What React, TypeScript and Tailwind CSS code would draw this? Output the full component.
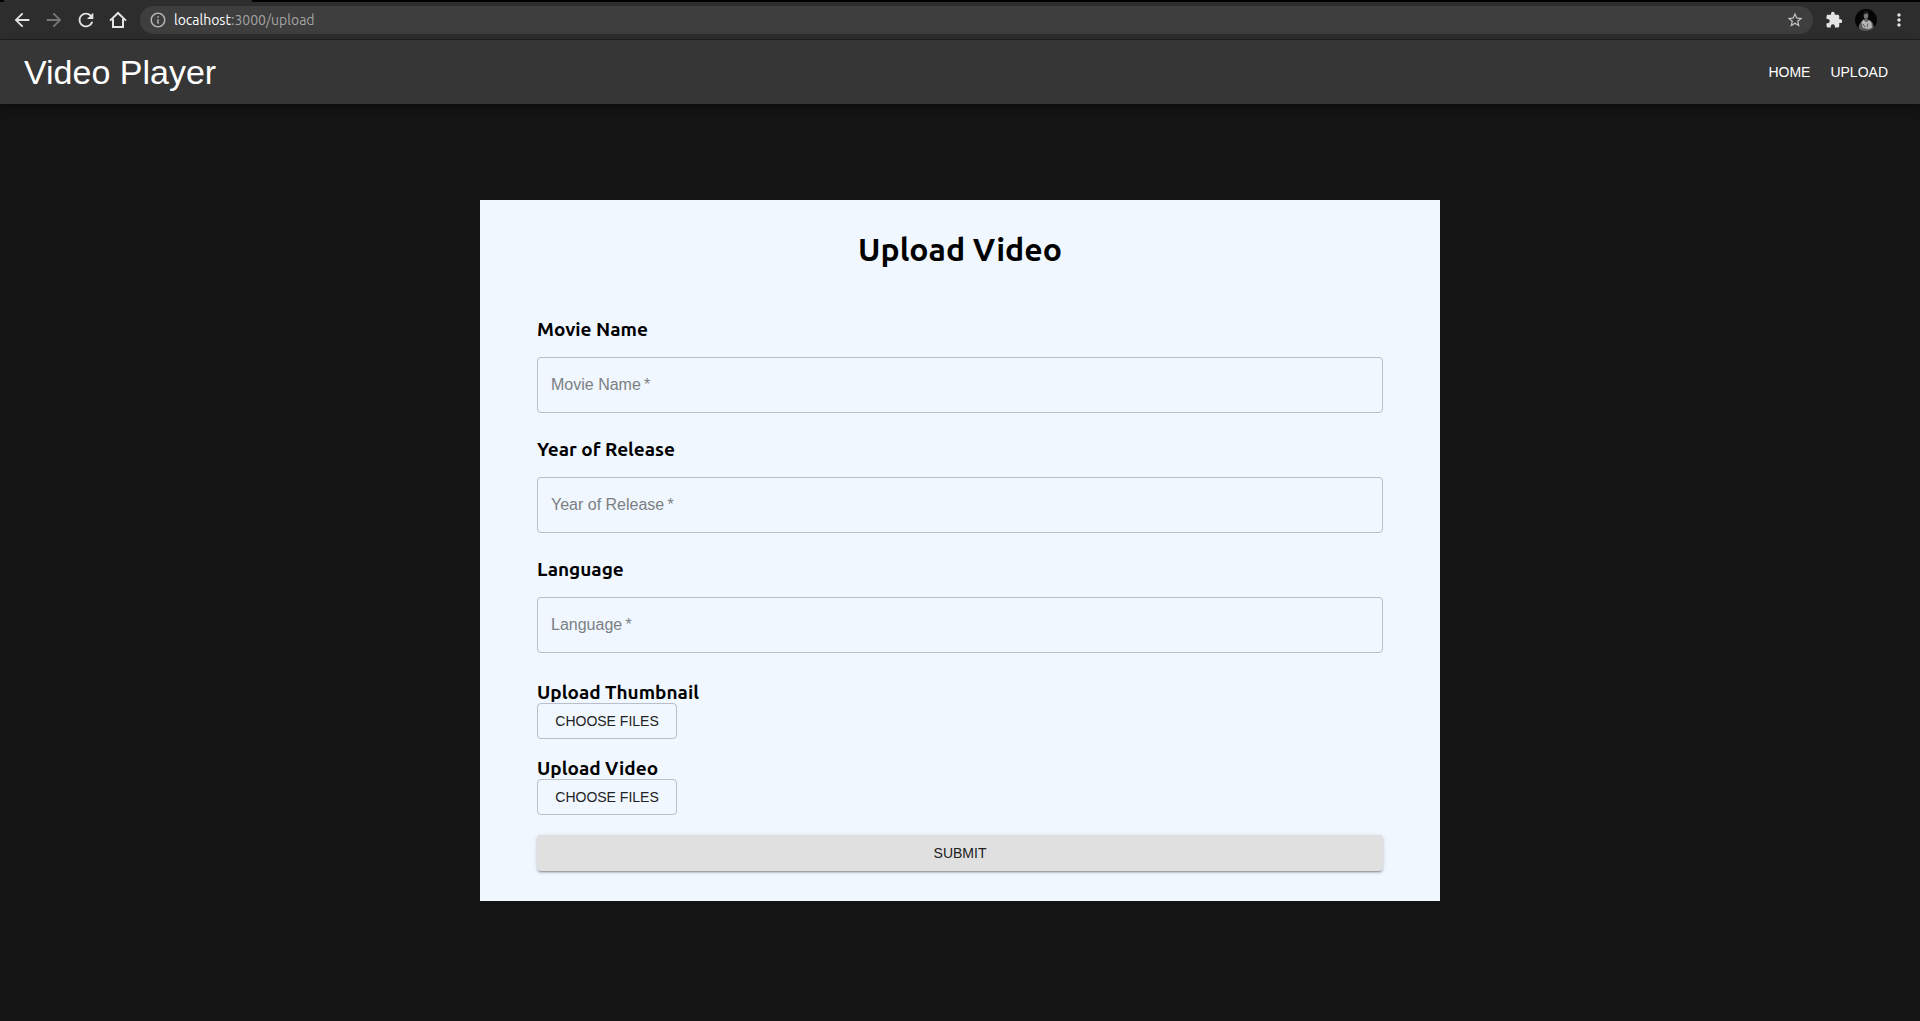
import { useRef } from "react";
import {
  MdArrowBack,
  MdArrowForward,
  MdExtension,
  MdInfoOutline,
  MdMoreVert,
  MdRefresh,
  MdStarBorder,
} from "react-icons/md";

function HomeIcon() {
  return (
    <svg width="18" height="18" viewBox="0 0 18 18" fill="none" stroke="currentColor" strokeWidth="2" aria-hidden="true">
      <path d="M1 9.6 9 2l8 7.6" />
      <path d="M4 7.5V16h10V7.5" />
    </svg>
  );
}

function Avatar() {
  return (
    <svg width="22" height="22" viewBox="0 0 22 22" aria-hidden="true">
      <clipPath id="avatar-clip">
        <circle cx="11" cy="11" r="11" />
      </clipPath>
      <g clipPath="url(#avatar-clip)">
        <rect width="22" height="22" fill="#050505" />
        <path d="M4 22c-.8-4-.2-7 2.500-9.500L9 10.500h4l3 1.500c2.500 1.800 3.200 5.500 3 10z" fill="#5e5e5e" />
        <path d="M6.500 13 8.500 10.500l3 3 2.500-2.500 2.500 3 .5 4.500-3 1.500-6-1z" fill="#b5b5b5" />
        <ellipse cx="11" cy="6.500" rx="2.300" ry="3.200" fill="#777" />
        <path d="M8.500 6c0-3 1.200-4 2.700-4s2.600 1 2.400 3.500c-1.500-1.500-3-1.300-5.100.5z" fill="#1c1c1c" />
        <path d="M9.500 9.500h3v2l-1.500 1.500-1.500-1.500z" fill="#666" />
        <path d="m8 15 2 3m3-3.500-1 3.500m-5 1 3 1" stroke="#555" fill="none" />
      </g>
    </svg>
  );
}

function BrowserBar() {
  return (
    <div className="border-b border-[#212121] bg-[#2d2d2d] text-[#e4e4e4]">
      <div className="flex h-0.5 bg-black">
        <div className="ml-1 w-[248px] bg-[#2d2d2d]" />
      </div>
      <div className="flex h-[37px] items-center pr-[11px] pb-px pl-[11px]">
        <div className="mr-[11px] flex items-center gap-2.5">
          <button type="button" aria-label="Back"><MdArrowBack size={22} /></button>
          <button type="button" aria-label="Forward" className="text-[#777777]"><MdArrowForward size={22} /></button>
          <button type="button" aria-label="Reload"><MdRefresh size={22} /></button>
          <button type="button" aria-label="Home page" className="px-0.5"><HomeIcon /></button>
        </div>
        <div className="flex h-7 flex-1 items-center rounded-full bg-[#3e3e3e] px-[9px]">
          <MdInfoOutline size={18} className="text-[#b4b4b4]" />
          <span className="ml-[7px] flex-1 font-['Ubuntu','Noto_Sans',sans-serif] text-sm leading-5 text-[#a5a5a5]">
            <span className="text-white">localhost</span>:3000/upload
          </span>
          <button type="button" aria-label="Bookmark this page" className="text-[#c4c4c4]"><MdStarBorder size={18} /></button>
        </div>
        <div className="ml-3 flex items-center gap-3">
          <button type="button" aria-label="Extensions"><MdExtension size={18} /></button>
          <button type="button" aria-label="Profile"><Avatar /></button>
          <button type="button" aria-label="Menu"><MdMoreVert size={20} /></button>
        </div>
      </div>
    </div>
  );
}

function NavBar() {
  return (
    <header className="flex h-16 items-center justify-between bg-[#363636] px-6 text-white shadow-[0_2px_4px_-1px_rgba(0,0,0,0.2),0_4px_5px_rgba(0,0,0,0.14),0_1px_10px_rgba(0,0,0,0.12)]">
      <span className="text-[34px] leading-[42px]">Video Player</span>
      <nav className="mr-2 flex gap-5 text-sm uppercase">
        <a href="/">Home</a>
        <a href="/upload">Upload</a>
      </nav>
    </header>
  );
}

const headingFont = "font-['Ubuntu','Noto_Sans',sans-serif] font-bold";
const labelStyle = "block text-[19px] leading-[22px]";

function Field({ id, label }: { id: string; label: string }) {
  return (
    <div className="mb-[25px]">
      <label htmlFor={id} className={`${headingFont} ${labelStyle}`}>{label}</label>
      <input
        id={id}
        type="text"
        required
        placeholder={`${label}\u2009*`}
        className="mt-[17px] block h-14 w-full rounded border border-[#b9bec8] bg-transparent px-[13px] text-base placeholder:text-[#7c7f83]"
      />
    </div>
  );
}

function FilePicker({ id, label, accept }: { id: string; label: string; accept: string }) {
  const input = useRef<HTMLInputElement>(null);
  return (
    <div>
      <label htmlFor={id} className={`${headingFont} ${labelStyle}`}>{label}</label>
      <input ref={input} type="file" accept={accept} multiple hidden />
      <button
        id={id}
        type="button"
        onClick={() => input.current?.click()}
        className="block h-9 w-[140px] rounded border border-[#b9bec8] text-sm text-[#212223] uppercase"
      >
        Choose Files
      </button>
    </div>
  );
}

export default function App() {
  return (
    <div className="flex min-h-screen flex-col bg-[#141414] font-['Liberation_Sans',Arial,sans-serif] text-black">
      <BrowserBar />
      <NavBar />
      <main className="mx-auto mt-24 mb-[120px] w-1/2 bg-[#f0f7ff] px-[57px] pt-7 pb-[30px]">
        <h1 className={`${headingFont} mb-12 text-center text-[32px] leading-[42px]`}>Upload Video</h1>
        <form onSubmit={(event) => event.preventDefault()}>
          <Field id="movie-name" label="Movie Name" />
          <Field id="release-year" label="Year of Release" />
          <Field id="language" label="Language" />
          <div className="flex flex-col gap-[18px] pt-[3px] pb-5">
            <FilePicker id="thumbnail" label="Upload Thumbnail" accept="image/*" />
            <FilePicker id="video" label="Upload Video" accept="video/*" />
          </div>
          <button
            type="submit"
            className="block h-9 w-full rounded bg-[#e0e0e0] text-sm text-[#212121] uppercase shadow-[0_3px_1px_-2px_rgba(0,0,0,0.2),0_2px_2px_rgba(0,0,0,0.14),0_1px_5px_rgba(0,0,0,0.12)]"
          >
            Submit
          </button>
        </form>
      </main>
    </div>
  );
}
